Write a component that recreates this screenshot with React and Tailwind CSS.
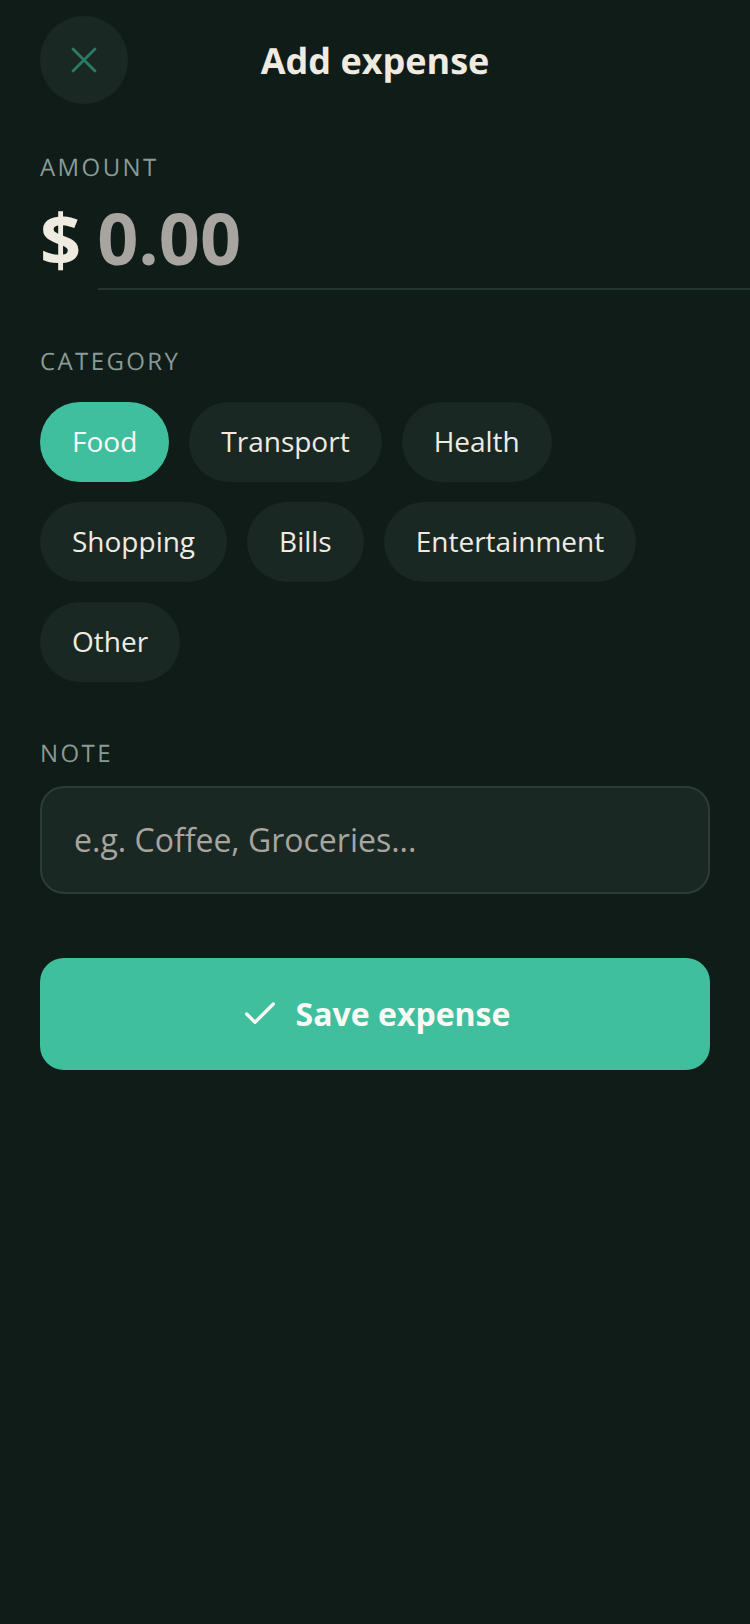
import { X, Check } from 'lucide-react'

const categories = ['Food', 'Transport', 'Health', 'Shopping', 'Bills', 'Entertainment', 'Other']

function Label({ children }) {
  return <p className="text-[24px] leading-[32px] tracking-[2.4px] text-[#8a9a94]">{children}</p>
}

export default function App() {
  const active = 'Food'

  return (
    <div className="min-h-[1624px] overflow-hidden bg-[#0f1c18] px-10 pt-4 font-['Open_Sans',sans-serif] text-[#f0ebe0] [text-rendering:geometricPrecision]">
      {/* Header */}
      <div className="flex items-center justify-between">
        <button className="flex h-[88px] w-[88px] items-center justify-center rounded-full bg-[#1a2824] text-[#2a7a64]">
          <X size={44} strokeWidth={1.5} />
        </button>
        <h1 className="mt-[2px] text-[36px] leading-[48px] font-bold">Add expense</h1>
        <div className="w-[88px]" />
      </div>

      {/* Amount */}
      <div className="mt-[48px]">
        <Label>AMOUNT</Label>
        <div className="-mr-10 mt-[4px] flex items-center gap-[17px]">
          <span className="text-[72px] leading-[98px] font-bold">$</span>
          <input
            className="min-w-0 flex-1 border-b-2 border-[#24352f] bg-transparent pb-[2px] -indent-px text-[72px] leading-[98px] font-bold outline-none placeholder:text-[#a8a4a0]"
            placeholder="0.00"
          />
        </div>
      </div>

      {/* Category */}
      <div className="mt-[56px]">
        <Label>CATEGORY</Label>
        <div className="mt-[24px] flex flex-wrap gap-5">
          {categories.map((c) => (
            <button
              key={c}
              className={`h-20 rounded-full px-8 pb-[2px] text-[28px] ${c === active ? 'bg-[#40bf9f] text-[#fbf9f4]' : 'bg-[#1a2824] text-[#f0ebe0]'}`}
            >
              {c}
            </button>
          ))}
        </div>
      </div>

      {/* Note */}
      <div className="mt-[56px]">
        <Label>NOTE</Label>
        <input
          className="mt-4 block h-[108px] w-full rounded-3xl border-2 border-[#2a3d37] bg-[#1a2824] px-8 pb-[2px] text-[32px] outline-none placeholder:text-[#a8a4a0]"
          placeholder="e.g. Coffee, Groceries..."
        />
      </div>

      <button className="mt-16 flex h-28 w-full items-center justify-center gap-4 rounded-3xl bg-[#40bf9f] text-[32px] font-bold text-[#fbf9f4]">
        <Check size={40} strokeWidth={2} />
        Save expense
      </button>
    </div>
  )
}
